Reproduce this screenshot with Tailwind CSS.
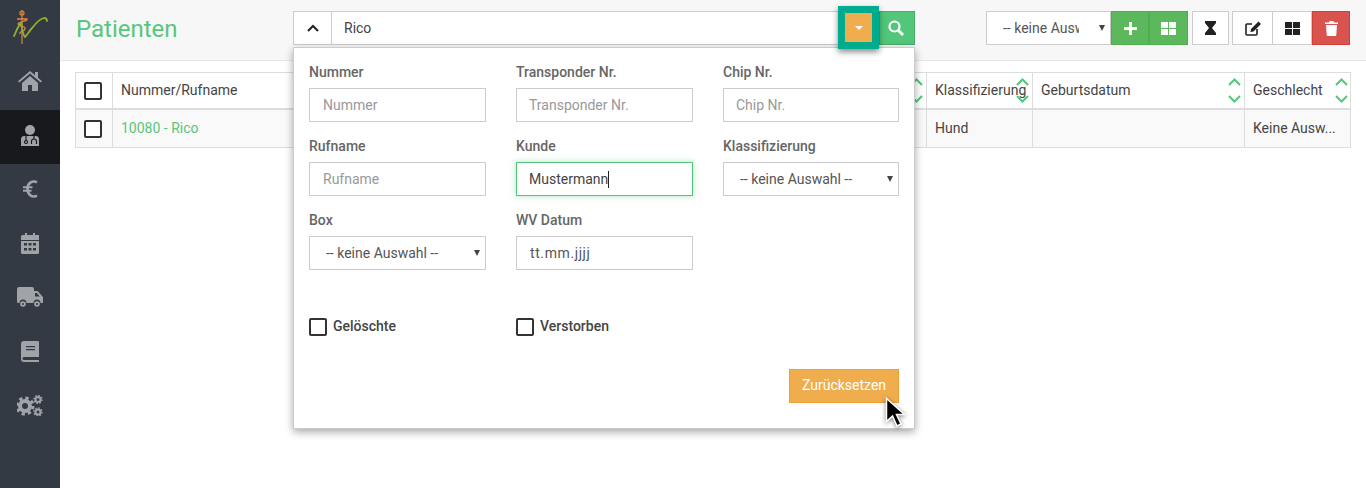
<!DOCTYPE html>
<html lang="de">
<head>
  <meta charset="UTF-8" />
  <meta name="viewport" content="width=device-width, initial-scale=1.0" />
  <title>Patienten</title>
  <script src="https://cdn.jsdelivr.net/npm/@tailwindcss/browser@4"></script>
</head>
<body class="h-[488px] w-[1366px] overflow-hidden bg-white font-['Roboto',sans-serif] text-[14px] text-[#444]">
<div class="flex h-full">

  <!-- sidebar -->
  <aside class="w-[60px] shrink-0 bg-[#343a43] text-[#a0a4a9]">
    <div class="h-[56px]">
      <svg width="60" height="56" viewBox="0 0 60 56" fill="none">
        <path d="M22 10v34" stroke="#e5853a" stroke-width="1.200"/>
        <circle cx="22" cy="13" r="2" stroke="#e5853a" stroke-width="1.200"/>
        <path d="M17 19h10c1 2-9 3-9 5s8 2 7 5-6 2-5 5" stroke="#e5853a" stroke-width="1.300"/>
        <path d="M14 36c2-4 4-10 7-13 1 4 1 10 4 14 2-2 5-7 8-10 3-4 7-8 11-9 2 0 3 1 3 3" stroke="#8fae35" stroke-width="1.800" stroke-linecap="round"/>
      </svg>
    </div>
    <nav class="flex flex-col">
      <a class="flex h-[54px] items-center justify-center pb-[4px]">
        <svg width="24" height="20" viewBox="0 0 24 20" fill="currentColor"><path d="M12 0 0 10.200l1.200 1.300L12 2.500l10.800 9 1.200-1.300L20 6.800V1h-3v3.200zM4 12v8h6v-6h4v6h6v-8L12 5z"/></svg>
      </a>
      <a class="flex h-[54px] items-center justify-center bg-[#17191d] pb-[4px]">
        <svg width="18" height="21" viewBox="0 0 18 21" fill="currentColor"><circle cx="9" cy="5" r="5"/><path d="M3 11h12c2 0 3 1.500 3 3.500V21H0v-6.500C0 12.500 1 11 3 11z"/><g fill="none" stroke="#17191d" stroke-width="1.200"><circle cx="5" cy="17" r="1.500"/><path d="M5 11v4.500M13 11v3M10.500 19v-2.500a2.500 2.500 0 0 1 5 0V19"/></g></svg>
      </a>
      <a class="flex h-[54px] items-center justify-center pb-[4px]">
        <svg width="15" height="18" viewBox="0 0 15 18" fill="none" stroke="currentColor" stroke-width="2.600"><path d="M14 2.200C9 .2 4.500 3 4.500 9s4.500 8.800 9.500 6.800"/><path d="M0 7.200h9.500M0 10.800h8.500" stroke-width="2"/></svg>
      </a>
      <a class="flex h-[54px] items-center justify-center pb-[4px]">
        <svg width="18" height="21" viewBox="0 0 18 21" fill="currentColor"><path d="M4 0h2v3H4zM12 0h2v3h-2zM1.500 2H18v5H0V3.500A1.500 1.500 0 0 1 1.500 2zM0 8h18v11.500a1.500 1.500 0 0 1-1.500 1.500h-15A1.500 1.500 0 0 1 0 19.500z"/><g fill="#343a43"><path d="M3 10h3v2.500H3zM7.500 10h3v2.500h-3zM12 10h3v2.500h-3zM3 15h3v2.500H3zM7.500 15h3v2.500h-3zM12 15h3v2.500h-3z"/></g></svg>
      </a>
      <a class="flex h-[54px] items-center justify-center pb-[4px]">
        <svg width="26" height="21" viewBox="0 0 26 21" fill="currentColor"><path d="M2 0h13a2 2 0 0 1 2 2v2h3.500L26 10v6h-2.500a3.500 3.500 0 0 0-7 0h-7a3.500 3.500 0 0 0-7 0H1.500A1.500 1.500 0 0 1 0 14.500V2a2 2 0 0 1 2-2z"/><circle cx="6" cy="17" r="2.800"/><circle cx="20" cy="17" r="2.800"/><circle cx="6" cy="17" r="1" fill="#343a43"/><circle cx="20" cy="17" r="1" fill="#343a43"/><path d="M18 6h1.800l3 3.500H18z" fill="#343a43"/></svg>
      </a>
      <a class="flex h-[54px] items-center justify-center pb-[4px]">
        <svg width="18" height="21" viewBox="0 0 18 21" fill="currentColor"><path d="M3 0h14a1 1 0 0 1 1 1v15H3a1.500 1.500 0 0 0 0 3h15v2H3a3 3 0 0 1-3-3V3a3 3 0 0 1 3-3z"/><path d="M5 5h9v1.300H5zM5 8h9v1.300H5z" fill="#343a43"/></svg>
      </a>
      <a class="flex h-[54px] items-center justify-center pb-[4px]">
        <svg width="26" height="21" viewBox="0 0 26 21" fill="none" stroke="currentColor">
          <circle cx="8" cy="11" r="5" stroke-width="4"/>
          <circle cx="8" cy="11" r="8" stroke-width="3" stroke-dasharray="3.300 3"/>
          <circle cx="21" cy="4.500" r="2.500" stroke-width="2"/>
          <circle cx="21" cy="4.500" r="4" stroke-width="1.400" stroke-dasharray="1.600 1.500"/>
          <circle cx="21" cy="17" r="2.500" stroke-width="2"/>
          <circle cx="21" cy="17" r="4" stroke-width="1.400" stroke-dasharray="1.600 1.500"/>
        </svg>
      </a>
    </nav>
  </aside>

  <main class="relative min-w-0 flex-1">
    <!-- top bar -->
    <header class="flex h-[61px] items-start border-b border-[#e6e6e6] bg-[#f7f7f7] pt-[11px]">
      <h1 class="ml-[16px] w-[217px] pt-[2px] text-[24px] leading-[32px] font-normal text-[#58c67d]">Patienten</h1>

      <div class="flex h-[34px]">
        <button class="flex h-[34px] w-[39px] items-center justify-center border border-[#ccc] bg-white">
          <svg width="12" height="8" viewBox="0 0 12 8" fill="none" stroke="#222" stroke-width="2"><path d="m1 7 5-5 5 5"/></svg>
        </button>
        <div class="flex h-[34px] w-[506px] items-center border-y border-[#ccc] bg-white pl-[12px]">Rico</div>
        <div class="z-20 -mt-[5px] flex h-[43px] w-[41px] items-center justify-center bg-[#00ab8e] shadow-[0_3px_6px_rgba(0,0,0,0.45)]">
          <button class="flex h-[29px] w-[27px] items-center justify-center bg-[#f0ad4e]">
            <span class="mt-[1px] border-x-[4px] border-t-[4px] border-x-transparent border-t-white"></span>
          </button>
        </div>
        <button class="flex h-[34px] w-[36px] items-center justify-center border border-[#4cae6a] bg-[#52c67a] pr-[3px]">
          <svg width="16" height="16" viewBox="0 0 16 16" fill="none" stroke="#fff"><circle cx="6.500" cy="6.500" r="5" stroke-width="2.200"/><path d="m10.500 10.500 4.500 4.500" stroke-width="2.800"/></svg>
        </button>
      </div>

      <div class="relative ml-[71px] h-[34px] w-[125px]">
        <select class="h-[34px] w-full appearance-none border border-[#ccc] bg-white pr-[31px] pl-[16px] text-[#555]">
          <option>-- keine Auswahl --</option>
        </select>
        <span class="absolute top-[14px] right-[6px] border-x-[3.500px] border-t-[6px] border-x-transparent border-t-[#444]"></span>
      </div>
      <button class="flex h-[34px] w-[38px] items-center justify-center border border-[#4cae4c] bg-[#5cb85c]">
        <svg width="13" height="13" viewBox="0 0 13 13" fill="#fff"><path d="M5 0h3v5h5v3H8v5H5V8H0V5h5z"/></svg>
      </button>
      <button class="flex h-[34px] w-[39px] items-center justify-center border border-[#4cae4c] bg-[#5cb85c]">
        <svg width="15" height="13" viewBox="0 0 15 13" fill="#fff"><path d="M0 0h7v6H0zM8 0h7v6H8zM0 7h7v6H0zM8 7h7v6H8z"/></svg>
      </button>
      <button class="ml-[4px] flex h-[34px] w-[37px] items-center justify-center border border-[#ccc] bg-white">
        <svg width="11" height="14" viewBox="0 0 11 14" fill="#222"><path d="M0 0h11v2L7 7l4 5v2H0v-2l4-5-4-5z"/></svg>
      </button>
      <button class="ml-[3px] flex h-[34px] w-[41px] items-center justify-center border border-[#ccc] bg-white">
        <svg width="16" height="15" viewBox="0 0 16 15" fill="none"><path d="M7 3H2a1 1 0 0 0-1 1v9a1 1 0 0 0 1 1h9a1 1 0 0 0 1-1V8" stroke="#222" stroke-width="1.600"/><path d="M13.500.5 16 3l-7.500 7.500-3 .5.500-3z" fill="#222"/></svg>
      </button>
      <button class="flex h-[34px] w-[39px] items-center justify-center border-y border-r border-[#ccc] bg-white">
        <svg width="15" height="13" viewBox="0 0 15 13" fill="#222"><path d="M0 0h7v6H0zM8 0h7v6H8zM0 7h7v6H0zM8 7h7v6H8z"/></svg>
      </button>
      <button class="flex h-[34px] w-[38px] items-center justify-center border border-[#d43f3a] bg-[#d9534f]">
        <svg width="13" height="15" viewBox="0 0 13 15" fill="#fff"><path d="M0 1.500h4L4.500 0h4L9 1.500h4V3H0zM1 4h11l-.7 10a1 1 0 0 1-1 1H2.700a1 1 0 0 1-1-1z"/></svg>
      </button>
    </header>

    <!-- table -->
    <div class="ml-[15px] mt-[11px] w-[1276px] border border-[#ddd]">
      <div class="flex h-[37px] border-b-2 border-[#ddd] bg-white">
        <div class="flex w-[37px] shrink-0 items-center justify-center border-r border-[#ddd] pr-[2px]">
          <span class="h-[18px] w-[18px] shrink-0 rounded-[2px] border-2 border-[#333] bg-white"></span>
        </div>
        <div class="flex w-[814px] shrink-0 items-center border-r border-[#ddd] pl-[8px]">
          Nummer/Rufname
          <span class="flex-1"></span>
          <span class="mr-[3px] flex h-full flex-col items-center justify-between py-[5px]">
            <svg width="13" height="8" viewBox="0 0 13 8" fill="none" stroke="#52c67a" stroke-width="2"><path d="m1 7 5.500-5.500L12 7"/></svg>
            <svg width="13" height="8" viewBox="0 0 13 8" fill="none" stroke="#52c67a" stroke-width="2"><path d="m1 1 5.500 5.500L12 1"/></svg>
          </span>
        </div>
        <div class="relative flex w-[106px] shrink-0 items-center border-r border-[#ddd] pl-[8px] whitespace-nowrap">
          Klassifizierung
          <span class="absolute top-0 right-[3px] flex h-full flex-col items-center justify-between py-[5px]">
            <svg width="13" height="8" viewBox="0 0 13 8" fill="none" stroke="#52c67a" stroke-width="2"><path d="m1 7 5.500-5.500L12 7"/></svg>
            <svg width="13" height="8" viewBox="0 0 13 8" fill="none" stroke="#52c67a" stroke-width="2"><path d="m1 1 5.500 5.500L12 1"/></svg>
          </span>
        </div>
        <div class="flex w-[212px] shrink-0 items-center border-r border-[#ddd] pl-[8px]">
          Geburtsdatum
          <span class="flex-1"></span>
          <span class="mr-[3px] flex h-full flex-col items-center justify-between py-[5px]">
            <svg width="13" height="8" viewBox="0 0 13 8" fill="none" stroke="#52c67a" stroke-width="2"><path d="m1 7 5.500-5.500L12 7"/></svg>
            <svg width="13" height="8" viewBox="0 0 13 8" fill="none" stroke="#52c67a" stroke-width="2"><path d="m1 1 5.500 5.500L12 1"/></svg>
          </span>
        </div>
        <div class="flex flex-1 items-center pl-[8px]">
          Geschlecht
          <span class="flex-1"></span>
          <span class="mr-[2px] flex h-full flex-col items-center justify-between py-[5px]">
            <svg width="13" height="8" viewBox="0 0 13 8" fill="none" stroke="#52c67a" stroke-width="2"><path d="m1 7 5.500-5.500L12 7"/></svg>
            <svg width="13" height="8" viewBox="0 0 13 8" fill="none" stroke="#52c67a" stroke-width="2"><path d="m1 1 5.500 5.500L12 1"/></svg>
          </span>
        </div>
      </div>
      <div class="flex h-[37px] bg-[#f9f9f9]">
        <div class="flex w-[37px] shrink-0 items-center justify-center border-r border-[#ddd] pr-[2px]">
          <span class="h-[18px] w-[18px] shrink-0 rounded-[2px] border-2 border-[#333] bg-white"></span>
        </div>
        <div class="flex w-[814px] shrink-0 items-center border-r border-[#ddd] pl-[8px] text-[#58c67d]">10080 - Rico</div>
        <div class="flex w-[106px] shrink-0 items-center border-r border-[#ddd] pl-[8px]">Hund</div>
        <div class="w-[212px] shrink-0 border-r border-[#ddd]"></div>
        <div class="flex flex-1 items-center pl-[8px]">Keine Ausw...</div>
      </div>
    </div>

    <!-- filter dropdown -->
    <div class="absolute top-[47px] left-[233px] z-10 h-[382px] w-[622px] border border-[#ccc] bg-white px-[15px] pt-[16px] shadow-[0_3px_8px_rgba(0,0,0,0.35)]">
      <div class="grid grid-cols-[177px_177px_176px] gap-x-[30px] gap-y-[16px] [&_label]:mb-[8px] [&_label]:block [&_label]:h-[16px] [&_label]:leading-[16px] [&_label]:font-medium [&_label]:text-[#666]">
        <div>
          <label>Nummer</label>
          <input placeholder="Nummer" class="h-[34px] w-full border border-[#ccc] px-[13px] outline-none placeholder:text-[#999]" />
        </div>
        <div>
          <label>Transponder Nr.</label>
          <input placeholder="Transponder Nr." class="h-[34px] w-full border border-[#ccc] px-[12px] outline-none placeholder:text-[#999]" />
        </div>
        <div>
          <label>Chip Nr.</label>
          <input placeholder="Chip Nr." class="h-[34px] w-full border border-[#ccc] px-[12px] outline-none placeholder:text-[#999]" />
        </div>
        <div>
          <label>Rufname</label>
          <input placeholder="Rufname" class="h-[34px] w-full border border-[#ccc] px-[13px] outline-none placeholder:text-[#999]" />
        </div>
        <div>
          <label>Kunde</label>
          <div class="relative">
            <input value="Mustermann" class="h-[34px] w-full border border-[#52c67a] px-[12px] text-[#444] shadow-[0_0_6px_rgba(82,198,122,0.5)] outline-none" />
            <span class="absolute top-[9px] left-[92px] h-[17px] w-px bg-[#222]"></span>
          </div>
        </div>
        <div>
          <label>Klassifizierung</label>
          <div class="relative">
            <select class="h-[34px] w-full appearance-none border border-[#ccc] bg-white pl-[16px] text-[#555]"><option>-- keine Auswahl --</option></select>
            <span class="absolute top-[14px] right-[6px] border-x-[3.500px] border-t-[6px] border-x-transparent border-t-[#444]"></span>
          </div>
        </div>
        <div>
          <label>Box</label>
          <div class="relative">
            <select class="h-[34px] w-full appearance-none border border-[#ccc] bg-white pl-[16px] text-[#555]"><option>-- keine Auswahl --</option></select>
            <span class="absolute top-[14px] right-[6px] border-x-[3.500px] border-t-[6px] border-x-transparent border-t-[#444]"></span>
          </div>
        </div>
        <div>
          <label>WV Datum</label>
          <input value="tt.mm.jjjj" class="h-[34px] w-full border border-[#ccc] px-[13px] tracking-[0.6px] text-[#555] outline-none" />
        </div>
      </div>

      <div class="mt-[46px] grid grid-cols-[177px_177px] gap-x-[30px]">
        <div class="flex items-center gap-[6px] font-medium text-[#444]">
          <span class="h-[18px] w-[18px] shrink-0 rounded-[2px] border-2 border-[#333]"></span>Gelöschte
        </div>
        <div class="flex items-center gap-[6px] font-medium text-[#444]">
          <span class="h-[18px] w-[18px] shrink-0 rounded-[2px] border-2 border-[#333]"></span>Verstorben
        </div>
      </div>

      <div class="mt-[32px] flex justify-end">
        <button class="h-[34px] w-[110px] border border-[#eea236] bg-[#f0ad4e] pb-[2px] text-white">Zurücksetzen</button>
      </div>
    </div>

    <!-- mouse pointer -->
    <svg class="absolute top-[397px] left-[825px] z-30 drop-shadow-[0_1px_2px_rgba(0,0,0,0.5)]" width="22" height="32" viewBox="0 0 22 32">
      <path d="M1.500 1.500v23l6-5.500 4.500 10 4-2-4.500-9.500h8z" fill="#000" stroke="#fff" stroke-width="1.500"/>
    </svg>
  </main>
</div>
</body>
</html>
